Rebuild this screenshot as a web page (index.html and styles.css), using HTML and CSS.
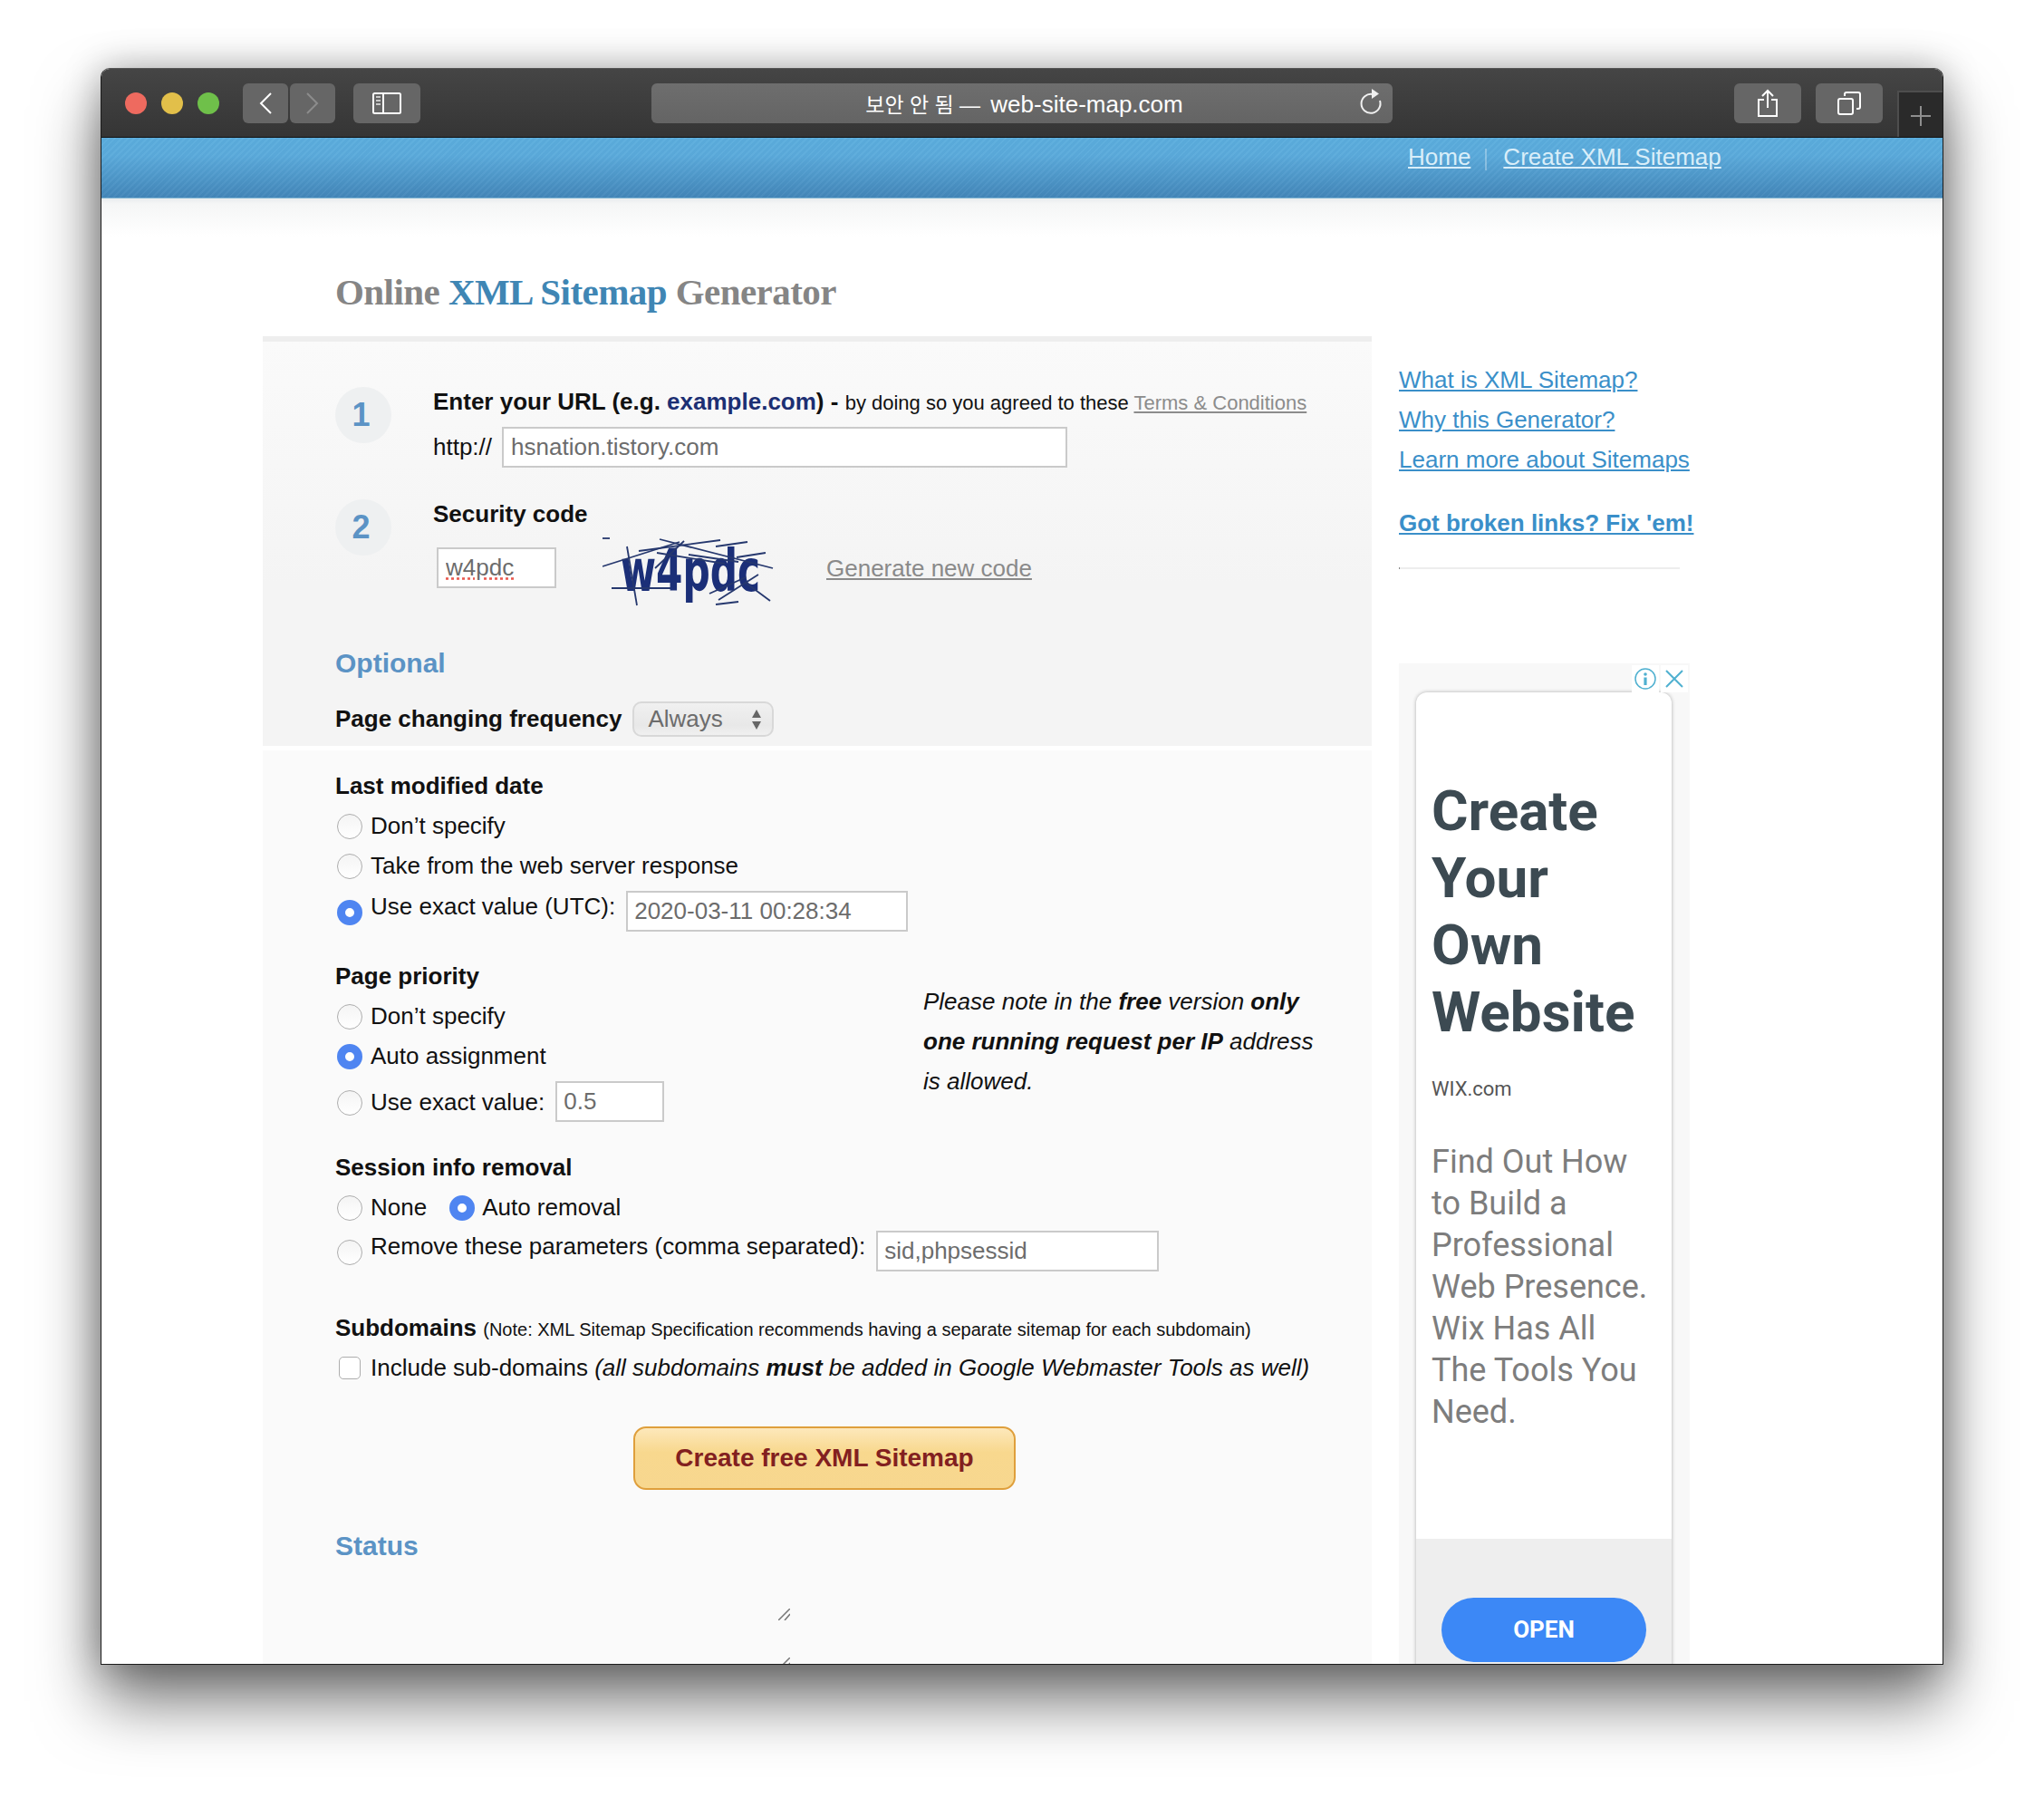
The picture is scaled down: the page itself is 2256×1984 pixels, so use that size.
FILE: index.html
```html
<!DOCTYPE html>
<html lang="en">
<head>
    <meta charset="UTF-8">
    <title>Online XML Sitemap Generator</title>
    <link rel="stylesheet" href="styles.css">
</head>
<body>
    <div class="window">
        <div class="toolbar">
            <div class="lights">
                <span class="light red"></span>
                <span class="light yellow"></span>
                <span class="light green"></span>
            </div>
            <div class="nav-btns">
                <div class="tool-btn small">
                    <svg width="16" height="24" viewBox="0 0 16 24"><path d="M14 1 L3 12 L14 23" fill="none" stroke="#fff" stroke-width="2"/></svg>
                </div>
                <div class="tool-btn small">
                    <svg width="16" height="24" viewBox="0 0 16 24"><path d="M2 1 L13 12 L2 23" fill="none" stroke="#8c8c8c" stroke-width="2"/></svg>
                </div>
            </div>
            <div class="tool-btn wide sidebar-btn">
                <svg width="32" height="24" viewBox="0 0 32 24">
                    <rect x="1" y="1" width="30" height="22" rx="1.5" fill="none" stroke="#fff" stroke-width="2"/>
                    <path d="M12 1 V23" stroke="#fff" stroke-width="2"/>
                    <path d="M4 5 H9 M4 9 H9 M4 13 H9" stroke="#c8c8c8" stroke-width="2"/>
                </svg>
            </div>
            <div class="address">
                <span class="address-text"><span class="ko">보안 안 됨 —</span> web-site-map.com</span>
                <svg class="reload" width="26" height="30" viewBox="0 0 26 30">
                    <path d="M15 7 A10.500 10.500 0 1 0 23 14" fill="none" stroke="#f0f0f0" stroke-width="2"/>
                    <path d="M14 1 L22 6.500 L14 12 Z" fill="#f0f0f0"/>
                </svg>
            </div>
            <div class="tool-btn wide share-btn">
                <svg width="24" height="32" viewBox="0 0 24 32">
                    <path d="M8 12 H2 V30 H22 V12 H16" fill="none" stroke="#fff" stroke-width="2"/>
                    <path d="M12 21 V2 M6 8 L12 2 L18 8" fill="none" stroke="#fff" stroke-width="2"/>
                </svg>
            </div>
            <div class="tool-btn wide tabs-btn">
                <svg width="26" height="26" viewBox="0 0 26 26">
                    <rect x="1" y="8" width="16" height="17" rx="2" fill="none" stroke="#fff" stroke-width="2"/>
                    <path d="M8 5 V3 Q8 1 10 1 H23 Q25 1 25 3 V17 Q25 19 23 19 H21" fill="none" stroke="#fff" stroke-width="2"/>
                </svg>
            </div>
            <div class="new-tab">
                <svg width="24" height="24" viewBox="0 0 24 24"><path d="M12 1 V23 M1 12 H23" stroke="#8e8e8e" stroke-width="2"/></svg>
            </div>
        </div>

        <div class="masthead">
            <a href="#">Home</a>
            <span class="nav-sep"></span>
            <a href="#">Create XML Sitemap</a>
        </div>

        <div class="page">
            <div class="main">
                <h1>Online <span>XML Sitemap</span> Generator</h1>
                <div class="panel">
                    <div class="panel-top">
                        <div class="step first">
                            <div class="step-num">1</div>
                            <div class="step-body">
                                <div class="step-title"><b>Enter your URL (e.g. <span class="navy">example.com</span>) -</b> <small>by doing so you agreed to these <a href="#" class="terms">Terms &amp; Conditions</a></small></div>
                                <div class="url-row">
                                    <span>http://</span>
                                    <input type="text" class="field url-field" value="hsnation.tistory.com">
                                </div>
                            </div>
                        </div>
                        <div class="step">
                            <div class="step-num">2</div>
                            <div class="step-body">
                                <div class="step-title"><b>Security code</b></div>
                                <div class="captcha-row">
                                    <input type="text" class="field code-field" value="w4pdc">
                                    <svg class="captcha" width="200" height="80" viewBox="0 0 200 80">
                                        <g class="captcha-ink">
                                            <text transform="translate(20 62) scale(0.92 1.4)" class="captcha-text">w4pdc</text>
                                            <g stroke="#26386e" stroke-width="1.800" fill="none">
                                                <path d="M0 35 L85 8"/>
                                                <path d="M63 5 L188 37"/>
                                                <path d="M90 7 L58 37"/>
                                                <path d="M125 13 L160 8"/>
                                                <path d="M148 25 L180 20"/>
                                                <path d="M60 20 L135 32"/>
                                                <path d="M40 18 L130 6"/>
                                                <path d="M95 22 L150 30"/>
                                                <path d="M10 59 L75 59"/>
                                                <path d="M27 13 L38 78"/>
                                                <path d="M118 65 L158 47"/>
                                                <path d="M125 77 L150 74"/>
                                                <path d="M158 53 L185 73"/>
                                                <path d="M0 4 L8 4"/>
                                                <path d="M128 72 L172 44"/>
                                            </g>
                                        </g>
                                    </svg>
                                    <a href="#" class="new-code">Generate new code</a>
                                </div>
                            </div>
                        </div>
                        <h3 class="optional">Optional</h3>
                        <div class="freq-row">
                            <b>Page changing frequency</b>
                            <div class="select">
                                <span>Always</span>
                                <svg width="12" height="24" viewBox="0 0 12 24"><path d="M6 1 L11 10 H1 Z M6 23 L11 14 H1 Z" fill="#666"/></svg>
                            </div>
                        </div>
                    </div>

                    <div class="panel-bottom">
                        <div class="group-title">Last modified date</div>
                        <label class="row"><input type="radio" name="lastmod"><span>Don’t specify</span></label>
                        <label class="row"><input type="radio" name="lastmod"><span>Take from the web server response</span></label>
                        <label class="row input-row"><input type="radio" name="lastmod" checked><span class="raised">Use exact value (UTC):</span><input type="text" class="field date-field" value="2020-03-11 00:28:34"></label>

                        <div class="priority">
                            <div class="priority-left">
                                <div class="group-title">Page priority</div>
                                <label class="row"><input type="radio" name="prio"><span>Don’t specify</span></label>
                                <label class="row"><input type="radio" name="prio" checked><span>Auto assignment</span></label>
                                <label class="row prio-row"><input type="radio" name="prio"><span>Use exact value:</span><input type="text" class="field prio-field" value="0.5"></label>
                            </div>
                            <p class="note">Please note in the <b>free</b> version <b>only<br>one running request per IP</b> address<br>is allowed.</p>
                        </div>

                        <div class="group-title spaced">Session info removal</div>
                        <div class="row">
                            <label class="inline"><input type="radio" name="sess"><span>None</span></label>
                            <label class="inline auto"><input type="radio" name="sess" checked><span>Auto removal</span></label>
                        </div>
                        <label class="row remove-row"><input type="radio" name="sess"><span class="raised">Remove these parameters (comma separated):</span><input type="text" class="field param-field" value="sid,phpsessid"></label>

                        <div class="group-title subdomains"><b>Subdomains</b> <small>(Note: XML Sitemap Specification recommends having a separate sitemap for each subdomain)</small></div>
                        <label class="row"><input type="checkbox"><span>Include sub-domains <i>(all subdomains <b>must</b> be added in Google Webmaster Tools as well)</i></span></label>

                        <button type="button" class="submit">Create free XML Sitemap</button>

                        <h3 class="status">Status</h3>
                        <div class="grip-box one">
                            <svg width="13" height="13" viewBox="0 0 13 13"><path d="M0 13 L13 0 M7 13 L13 6" stroke="#777" stroke-width="1.500"/></svg>
                        </div>
                        <div class="grip-box two">
                            <svg width="13" height="13" viewBox="0 0 13 13"><path d="M0 13 L13 0 M7 13 L13 6" stroke="#777" stroke-width="1.500"/></svg>
                        </div>
                    </div>
                </div>
            </div>

            <div class="side">
                <a href="#" class="side-link">What is XML Sitemap?</a>
                <a href="#" class="side-link">Why this Generator?</a>
                <a href="#" class="side-link">Learn more about Sitemaps</a>
                <a href="#" class="side-link broken">Got broken links? Fix 'em!</a>
                <div class="side-rule"></div>

                <div class="ad">
                    <div class="ad-icons">
                        <span class="ad-icon">
                            <svg width="24" height="24" viewBox="0 0 24 24">
                                <circle cx="12" cy="12" r="11" fill="none" stroke="#4fb0d0" stroke-width="1.500"/>
                                <circle cx="12" cy="7" r="1.800" fill="#4fb0d0"/>
                                <path d="M12 10.500 V19" stroke="#4fb0d0" stroke-width="3.200"/>
                            </svg>
                        </span>
                        <span class="ad-icon">
                            <svg width="20" height="20" viewBox="0 0 20 20"><path d="M1 1 L19 19 M19 1 L1 19" stroke="#4fb0d0" stroke-width="2"/></svg>
                        </span>
                    </div>
                    <div class="ad-card">
                        <div class="ad-body">
                            <div class="ad-title">Create<br>Your<br>Own<br>Website</div>
                            <div class="ad-site">WIX.com</div>
                            <div class="ad-text">Find Out How<br>to Build a<br>Professional<br>Web Presence.<br>Wix Has All<br>The Tools You<br>Need.</div>
                        </div>
                        <div class="ad-foot">
                            <div class="ad-open">OPEN</div>
                        </div>
                    </div>
                </div>
            </div>
        </div>
    </div>
</body>
</html>
```

FILE: styles.css
```css
* {
    box-sizing: border-box;
}

html, body {
    height: 1984px;
    overflow: hidden;
}

body {
    margin: 0;
    padding: 75px 111px 0;
    background-color: #fff;
    font-family: "Liberation Sans", Arial, sans-serif;
    font-size: 26px;
    color: #111;
}

a {
    color: inherit;
}

/* browser window */
.window {
    width: 2034px;
    height: 1762px;
    display: flex;
    flex-direction: column;
    overflow: hidden;
    border: 1px solid #1c1c1c;
    border-top-color: #555;
    border-radius: 10px 10px 0 0;
    background: #fff;
    box-shadow: 0 40px 70px rgba(0, 0, 0, 0.55), 0 0 40px rgba(0, 0, 0, 0.28);
}

.toolbar {
    flex: 0 0 76px;
    display: flex;
    align-items: center;
    padding: 1px 0 0 26px;
    background: linear-gradient(#454545, #353535);
    border-bottom: 1px solid #111;
}

.lights {
    display: flex;
    gap: 16px;
}

.light {
    width: 24px;
    height: 24px;
    border-radius: 50%;
}

.red { background: #ee6a5f; }
.yellow { background: #e2bf4a; }
.green { background: #6fc04a; }

.nav-btns {
    display: flex;
    gap: 2px;
    margin-left: 26px;
}

.tool-btn {
    height: 44px;
    display: flex;
    align-items: center;
    justify-content: center;
    background: #666;
    border-radius: 6px;
}

.tool-btn.small { width: 50px; }
.tool-btn.wide { width: 74px; }

.sidebar-btn { margin-left: 20px; }
.share-btn { margin-left: 377px; }
.tabs-btn { margin-left: 16px; }

.address {
    position: relative;
    width: 818px;
    height: 44px;
    margin-left: 255px;
    display: flex;
    align-items: center;
    justify-content: center;
    padding-left: 5px;
    background: linear-gradient(#6e6e6e, #646464);
    border-radius: 6px;
    color: #fff;
    font-family: "Liberation Sans", "Noto Sans CJK KR", sans-serif;
    font-size: 26px;
}

.ko {
    margin-right: 4px;
    font-size: 23px;
}

.reload {
    position: absolute;
    right: 11px;
    top: 5px;
}

.new-tab {
    align-self: flex-end;
    width: 50px;
    height: 51px;
    margin-left: 16px;
    display: flex;
    align-items: center;
    justify-content: center;
    padding-top: 2px;
    background: #2a2a2a;
    border-top: 2px solid #4e4e4e;
    border-left: 2px solid #4e4e4e;
}

/* blue site header */
.masthead {
    flex: 0 0 67px;
    display: flex;
    align-items: flex-start;
    padding: 5px 0 0 1442px;
    line-height: 32px;
    color: #d9eef9;
    background:
        repeating-linear-gradient(135deg, rgba(255, 255, 255, 0.035) 0 2px, rgba(0, 0, 0, 0.015) 2px 5px),
        linear-gradient(#5aaddd, #5aaadb 30%, #4386b9);
    border-bottom: 1px solid #7fb4d2;
}

.nav-sep {
    width: 2px;
    height: 24px;
    margin: 7px 18px 0 16px;
    background: rgba(255, 255, 255, 0.3);
}

.page {
    flex: 1;
    min-height: 0;
    display: flex;
    overflow: hidden;
    background: linear-gradient(#e9ecee, #f5f6f6 6px, #fff 42px);
}

.main {
    width: 1224px;
    margin-left: 178px;
    display: flex;
    flex-direction: column;
}

h1 {
    margin: 78px 0 24px 80px;
    font-family: "Liberation Serif", "Times New Roman", serif;
    font-size: 41px;
    line-height: 50px;
    letter-spacing: -0.55px;
    color: #858585;
}

h1 span {
    color: #3f86b4;
}

.panel {
    flex: 1;
    display: flex;
    flex-direction: column;
    gap: 5px;
    border-top: 6px solid #eeeeee;
}

.panel-top {
    padding: 50px 0 10px 80px;
    background: linear-gradient(#fafafa, #f4f4f4 60%);
}

.step {
    display: flex;
    gap: 46px;
}

.step.first {
    margin-bottom: 35px;
}

.step-num {
    flex: 0 0 62px;
    height: 62px;
    padding-right: 5px;
    border-radius: 50%;
    background: #eef0f1;
    color: #5b93c5;
    font-size: 36px;
    font-weight: bold;
    line-height: 62px;
    text-align: center;
}

.step-title {
    height: 32px;
    line-height: 32px;
    white-space: nowrap;
}

.step-title small {
    font-size: 22px;
}

.navy {
    color: #1c2f73;
}

.terms {
    color: #8c8c8c;
}

.field {
    height: 45px;
    padding: 0 7px;
    border: 2px solid #cacaca;
    background: #fff;
    color: #6c6c6c;
    font-family: inherit;
    font-size: 26px;
    outline: none;
}

.url-row {
    display: flex;
    align-items: center;
    gap: 11px;
    margin-top: 12px;
}

.url-field { width: 624px; padding-left: 8px; }
.code-field {
    width: 132px;
    margin: 14px 0 0 4px;
    padding-left: 8px;
    text-decoration: underline dotted #ea5a50;
}
.date-field { width: 311px; margin-left: 12px; }
.prio-field { width: 120px; margin-left: 12px; }
.param-field { width: 312px; margin-left: 12px; }

.captcha-row {
    display: flex;
    align-items: flex-start;
    margin-top: 7px;
}

.captcha {
    margin-left: 51px;
}

.captcha-ink {
    filter: blur(0.4px);
}

.captcha-text {
    font-family: "DejaVu Sans", sans-serif;
    font-size: 46px;
    font-weight: bold;
    fill: #1b2f78;
}

.new-code {
    margin: 21px 0 0 47px;
    line-height: 32px;
    color: #8a8a8a;
}

h3 {
    margin: 0;
    font-size: 30px;
    line-height: 40px;
    color: #5b93c5;
}

.optional {
    margin-top: 42px;
}

.freq-row {
    display: flex;
    align-items: center;
    gap: 12px;
    margin-top: 22px;
}

.select {
    width: 156px;
    height: 39px;
    display: flex;
    align-items: center;
    justify-content: space-between;
    padding: 0 11px 0 15px;
    border: 2px solid #d8d8d8;
    border-radius: 10px;
    background: linear-gradient(#f0f0f0, #e8e8e8 70%, #f0f0f0);
    color: #6c6c6c;
}

.panel-bottom {
    flex: 1;
    padding: 17px 0 0 80px;
    background: #fafafa;
}

.group-title {
    height: 44px;
    font-weight: bold;
    line-height: 44px;
}

.group-title.spaced {
    margin-top: 28px;
}

.group-title.subdomains {
    margin-top: 40px;
}

.group-title small {
    font-size: 20px;
    font-weight: normal;
}

.row {
    display: flex;
    align-items: center;
    min-height: 44px;
}

.row span {
    line-height: 32px;
}

input[type="radio"], input[type="checkbox"] {
    appearance: none;
    flex: none;
    width: 28px;
    height: 28px;
    margin: 2px 9px 0 2px;
    border: 1.500px solid #adadad;
    border-radius: 50%;
    background: linear-gradient(#f4f4f4, #fff);
}

input[type="radio"]:checked {
    border: 9px solid #4f85f1;
    background: #fff;
}

input[type="checkbox"] {
    width: 24px;
    height: 25px;
    margin: 0 11px 0 4px;
    border-radius: 5px;
    background: #fff;
}

.input-row {
    margin-top: 6px;
}

.prio-row {
    margin-top: 6px;
}

.remove-row {
    margin-top: 4px;
}

.raised {
    margin-bottom: 12px;
}

.inline {
    display: flex;
    align-items: center;
}

.inline.auto {
    margin-left: 23px;
}

.inline.auto input {
    margin-right: 8px;
}

.priority {
    display: flex;
    margin-top: 27px;
}

.priority-left {
    width: 649px;
}

.note {
    margin: 28px 0 0;
    font-size: 26px;
    font-style: italic;
    line-height: 44px;
    white-space: nowrap;
}

.submit {
    display: block;
    width: 422px;
    height: 70px;
    margin: 43px 0 0 329px;
    border: 2px solid #df9f3c;
    border-radius: 14px;
    background: linear-gradient(#fde8bb, #f8d88e 40%, #f7d78f);
    color: #822020;
    font-family: inherit;
    font-size: 28px;
    font-weight: bold;
}

.status {
    margin-top: 42px;
}

.grip-box {
    width: 502px;
    display: flex;
    justify-content: flex-end;
    align-items: flex-end;
}

.grip-box.one { height: 62px; }
.grip-box.two { height: 54px; }

/* right column */
.side {
    width: 321px;
    margin-left: 30px;
    padding-top: 178px;
    display: flex;
    flex-direction: column;
}

.side-link {
    flex: none;
    line-height: 44px;
    color: #3a8fc9;
    white-space: nowrap;
}

.side-link.broken {
    margin-top: 26px;
    font-weight: bold;
}

.side-rule {
    flex: none;
    width: 310px;
    height: 2px;
    margin-top: 27px;
    background: #ededed;
    border-left: 1px solid #888;
}

.ad {
    position: relative;
    flex: 1;
    min-height: 0;
    margin-top: 104px;
    padding: 32px 19px 0;
    background: #f8f8f8;
    font-family: Roboto, sans-serif;
}

.ad-icons {
    position: absolute;
    top: 2px;
    right: 2px;
    display: flex;
    gap: 2px;
}

.ad-icon {
    width: 30px;
    height: 30px;
    display: flex;
    align-items: center;
    justify-content: center;
    background: #fff;
}

.ad-card {
    width: 282px;
    height: 1100px;
    border-radius: 12px 12px 0 0;
    background: #fff;
    box-shadow: 0 0 4px rgba(0, 0, 0, 0.3);
    overflow: hidden;
}

.ad-body {
    height: 934px;
    padding: 94px 0 0 17px;
}

.ad-title {
    font-size: 62px;
    font-weight: 700;
    line-height: 74px;
    color: #3c4a52;
}

.ad-site {
    margin-top: 33px;
    font-size: 22px;
    line-height: 30px;
    color: #555;
}

.ad-text {
    margin-top: 42px;
    font-size: 36px;
    line-height: 46px;
    color: #7d7d7d;
    white-space: nowrap;
}

.ad-foot {
    height: 166px;
    padding: 65px 0 0 28px;
    background: #eeeeee;
}

.ad-open {
    width: 226px;
    height: 71px;
    border-radius: 36px;
    background: #3c88f6;
    color: #fff;
    font-size: 26px;
    font-weight: 700;
    line-height: 71px;
    text-align: center;
}
```
